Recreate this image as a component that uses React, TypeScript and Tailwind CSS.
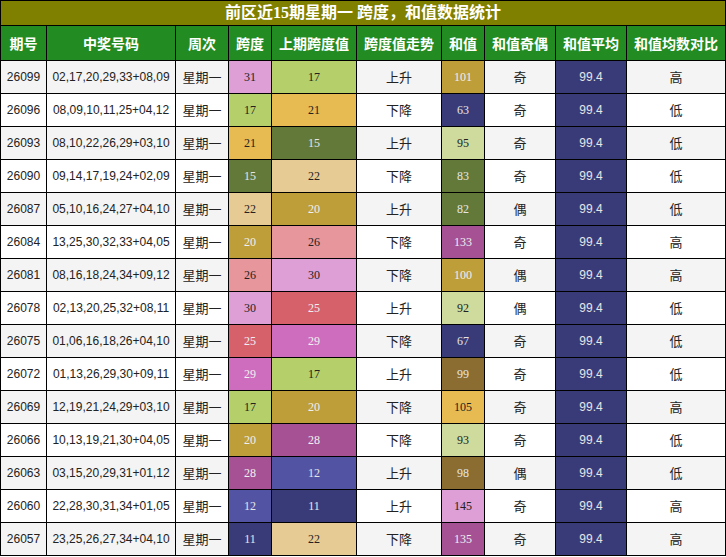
import React from "react";

const C: Record<string, string> = {
  "393b79": "bg-[#393b79] text-[#e6e6e6]",
  "5254a3": "bg-[#5254a3] text-[#e6e6e6]",
  "637939": "bg-[#637939] text-[#e6e6e6]",
  b5cf6b: "bg-[#b5cf6b] text-[#222]",
  cedb9c: "bg-[#cedb9c] text-[#222]",
  "8c6d31": "bg-[#8c6d31] text-[#e6e6e6]",
  bd9e39: "bg-[#bd9e39] text-[#f0f0f0]",
  e7ba52: "bg-[#e7ba52] text-[#222]",
  e7cb94: "bg-[#e7cb94] text-[#222]",
  d6616b: "bg-[#d6616b] text-[#f0f0f0]",
  e7969c: "bg-[#e7969c] text-[#222]",
  a55194: "bg-[#a55194] text-[#f0f0f0]",
  ce6dbd: "bg-[#ce6dbd] text-[#f0f0f0]",
  de9ed6: "bg-[#de9ed6] text-[#222]",
};

const spanColor: Record<number, string> = {
  31: "de9ed6",
  30: "de9ed6",
  17: "b5cf6b",
  21: "e7ba52",
  15: "637939",
  22: "e7cb94",
  20: "bd9e39",
  26: "e7969c",
  25: "d6616b",
  29: "ce6dbd",
  28: "a55194",
  12: "5254a3",
  11: "393b79",
};

const sumColor: Record<number, string> = {
  101: "bd9e39",
  63: "393b79",
  95: "cedb9c",
  83: "637939",
  82: "637939",
  133: "a55194",
  100: "bd9e39",
  92: "cedb9c",
  67: "393b79",
  99: "8c6d31",
  105: "e7ba52",
  93: "cedb9c",
  98: "8c6d31",
  145: "de9ed6",
  135: "a55194",
};

type Row = [string, string, number, number, string, number, string, string];

const rows: Row[] = [
  ["26099", "02,17,20,29,33+08,09", 31, 17, "上升", 101, "奇", "高"],
  ["26096", "08,09,10,11,25+04,12", 17, 21, "下降", 63, "奇", "低"],
  ["26093", "08,10,22,26,29+03,10", 21, 15, "上升", 95, "奇", "低"],
  ["26090", "09,14,17,19,24+02,09", 15, 22, "下降", 83, "奇", "低"],
  ["26087", "05,10,16,24,27+04,10", 22, 20, "上升", 82, "偶", "低"],
  ["26084", "13,25,30,32,33+04,05", 20, 26, "下降", 133, "奇", "高"],
  ["26081", "08,16,18,24,34+09,12", 26, 30, "下降", 100, "偶", "高"],
  ["26078", "02,13,20,25,32+08,11", 30, 25, "上升", 92, "偶", "低"],
  ["26075", "01,06,16,18,26+04,10", 25, 29, "下降", 67, "奇", "低"],
  ["26072", "01,13,26,29,30+09,11", 29, 17, "上升", 99, "奇", "低"],
  ["26069", "12,19,21,24,29+03,10", 17, 20, "下降", 105, "奇", "高"],
  ["26066", "10,13,19,21,30+04,05", 20, 28, "下降", 93, "奇", "低"],
  ["26063", "03,15,20,29,31+01,12", 28, 12, "上升", 98, "偶", "低"],
  ["26060", "22,28,30,31,34+01,05", 12, 11, "上升", 145, "奇", "高"],
  ["26057", "23,25,26,27,34+04,10", 11, 22, "下降", 135, "奇", "高"],
];

const headers = ["期号", "中奖号码", "周次", "跨度", "上期跨度值", "跨度值走势", "和值", "和值奇偶", "和值平均", "和值均数对比"];

const sans = "font-['Liberation_Sans','Noto_Sans_CJK_SC',sans-serif]";
const serif = "font-['Liberation_Serif','Noto_Sans_CJK_SC',serif]";
const cjk = "font-['Noto_Sans_CJK_SC',sans-serif]";

export default function App() {
  return (
    <div className="w-[726px] h-[557px] bg-white">
      <div className="grid grid-cols-[45px_128px_52px_42px_84px_84px_42px_70px_70px_98px] gap-px p-px bg-black w-[726px]">
        <div className={`col-span-10 h-[24px] bg-[#808000] text-white font-bold text-[16px] flex items-center justify-center ${serif}`}>
          前区近15期星期一 跨度，和值数据统计
        </div>
        {headers.map((h) => (
          <div
            key={h}
            className={`h-[34px] bg-[#228b22] text-white font-bold text-[14px] flex items-center justify-center ${cjk}`}
          >
            {h}
          </div>
        ))}
        {rows.map((r, i) => {
          const bg = i % 2 === 0 ? "bg-[#f4f4f4]" : "bg-white";
          const cell = `h-[32px] flex items-center justify-center ${bg} text-[#222]`;
          return (
            <React.Fragment key={r[0]}>
              <div className={`${cell} ${sans} text-[12px]`}>{r[0]}</div>
              <div className={`${cell} ${sans} text-[12px]`}>{r[1]}</div>
              <div className={`${cell} ${cjk} text-[13px]`}>星期一</div>
              <div className={`h-[32px] flex items-center justify-center ${serif} text-[12px] ${C[spanColor[r[2]]]}`}>{r[2]}</div>
              <div className={`h-[32px] flex items-center justify-center ${serif} text-[12px] ${C[spanColor[r[3]]]}`}>{r[3]}</div>
              <div className={`${cell} ${cjk} text-[13px]`}>{r[4]}</div>
              <div className={`h-[32px] flex items-center justify-center ${serif} text-[12px] ${C[sumColor[r[5]]]}`}>{r[5]}</div>
              <div className={`${cell} ${cjk} text-[13px]`}>{r[6]}</div>
              <div className={`h-[32px] flex items-center justify-center ${sans} text-[12px] bg-[#393b79] text-[#e6e6e6]`}>99.4</div>
              <div className={`${cell} ${cjk} text-[13px]`}>{r[7]}</div>
            </React.Fragment>
          );
        })}
      </div>
    </div>
  );
}
